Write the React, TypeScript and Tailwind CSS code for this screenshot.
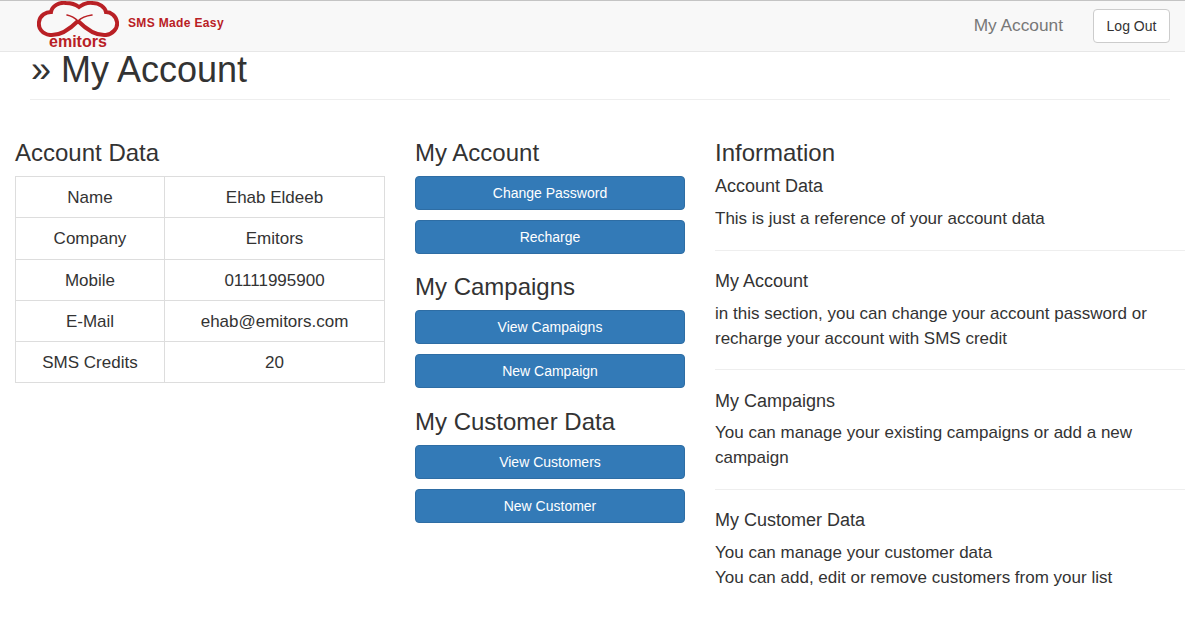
const rows = [
  ['Name', 'Ehab Eldeeb'],
  ['Company', 'Emitors'],
  ['Mobile', '01111995900'],
  ['E-Mail', 'ehab@emitors.com'],
  ['SMS Credits', '20'],
];

const groups = [
  { title: 'My Account', buttons: ['Change Password', 'Recharge'], gap: 'mb-[20px]' },
  { title: 'My Campaigns', buttons: ['View Campaigns', 'New Campaign'], gap: 'mb-[20.4px]' },
  { title: 'My Customer Data', buttons: ['View Customers', 'New Customer'], gap: 'mb-[20px]' },
];

const Logo = () => (
  <svg width="82" height="48" viewBox="0 0 82 48" fill="none" className="block">
    <path
      d="M41 20 C34 27 24 35 13 34 C5 33 1 27 2 21 C3 14 9 11 14 11 C15 5 22 1 29 2 C34 2 38 3 42 6 C46 3 50 1 56 2 C62 2 68 6 69 11 C74 11 79 15 80 21 C81 27 76 33 69 34 C58 35 48 27 41 20"
      stroke="#b92025"
      strokeWidth="4"
    />
    <path d="M30 14 C35 15 38 17 41 20 C44 17 48 15 55 14" stroke="#b92025" strokeWidth="1.6" strokeLinecap="round" />
  </svg>
);

export default function App() {
  return (
    <div className="min-h-screen bg-white font-['Liberation_Sans',Arial,sans-serif] text-[#333]">
      <nav className="h-[52px] bg-[#f8f8f8] border-t border-b border-t-[#c4c4c4] border-b-[#e7e7e7] flex items-center justify-between pl-[37px] pr-[15px]">
        <div className="relative flex items-start h-full w-[200px]">
          <Logo />
          <span className="absolute left-[12px] top-[32px] text-[16px] leading-[18px] font-bold text-[#b92025]">emitors</span>
          <span className="ml-[9px] mt-[15px] text-[12px] leading-[14px] font-bold tracking-[0.35px] text-[#b92025] whitespace-nowrap">SMS Made Easy</span>
        </div>
        <div className="flex items-center">
          <a className="text-[17.3px] text-[#777] pr-[15px]">My Account</a>
          <button className="ml-[15px] h-[34px] w-[77px] text-[14px] bg-white border border-[#ccc] rounded text-[#333]">Log Out</button>
        </div>
      </nav>

      <div className="ml-[30px] mr-[15px] pl-px pb-[9px] border-b border-[#eee] h-[48px]">
        <h1 className="text-[36px] leading-[36px] mt-0">» My Account</h1>
      </div>

      <div className="flex mt-[39.6px]">
        <div className="w-[400px] px-[15px]">
          <h3 className="text-[24px] leading-[26.4px] mb-[10px]">Account Data</h3>
          <table className="w-full border-collapse text-[17px] text-center">
            <tbody>
              {rows.map(([k, v]) => (
                <tr key={k} className="h-[41.3px]">
                  <td className="w-[149px] border border-[#ddd] pt-[1.4px]">{k}</td>
                  <td className="border border-[#ddd] pt-[1.4px]">{v}</td>
                </tr>
              ))}
            </tbody>
          </table>
        </div>

        <div className="w-[300px] px-[15px]">
          {groups.map(g => (
            <div key={g.title} className={g.gap}>
              <h3 className="text-[24px] leading-[26.4px] mb-[10px]">{g.title}</h3>
              <div className="flex flex-col gap-[10px]">
                {g.buttons.map(b => (
                  <button key={b} className="h-[34px] text-[14px] text-white bg-[#337ab7] border border-[#2e6da4] rounded">{b}</button>
                ))}
              </div>
            </div>
          ))}
        </div>

        <div className="flex-1 pl-[15px] pt-[0.2px]">
          <h3 className="text-[24px] leading-[26.4px] mb-[10px]">Information</h3>
          <h4 className="text-[18px] leading-[21.8px] mb-[8px]">Account Data</h4>
          <p className="text-[17px] leading-[25px]">This is just a reference of your account data</p>
          <hr className="mt-[18.8px] mb-[20px] border-[#eee]" />
          <h4 className="text-[18px] leading-[21.8px] mb-[8px]">My Account</h4>
          <p className="text-[17px] leading-[25px]">in this section, you can change your account password or<br />recharge your account with SMS credit</p>
          <hr className="mt-[18.8px] mb-[20px] border-[#eee]" />
          <h4 className="text-[18px] leading-[22px] mb-[7.8px]">My Campaigns</h4>
          <p className="text-[17px] leading-[25px]">You can manage your existing campaigns or add a new<br />campaign</p>
          <hr className="mt-[18.8px] mb-[20px] border-[#eee]" />
          <h4 className="text-[18px] leading-[21.8px] mb-[8px]">My Customer Data</h4>
          <p className="text-[17px] leading-[25px]">You can manage your customer data<br />You can add, edit or remove customers from your list</p>
        </div>
      </div>
    </div>
  );
}
